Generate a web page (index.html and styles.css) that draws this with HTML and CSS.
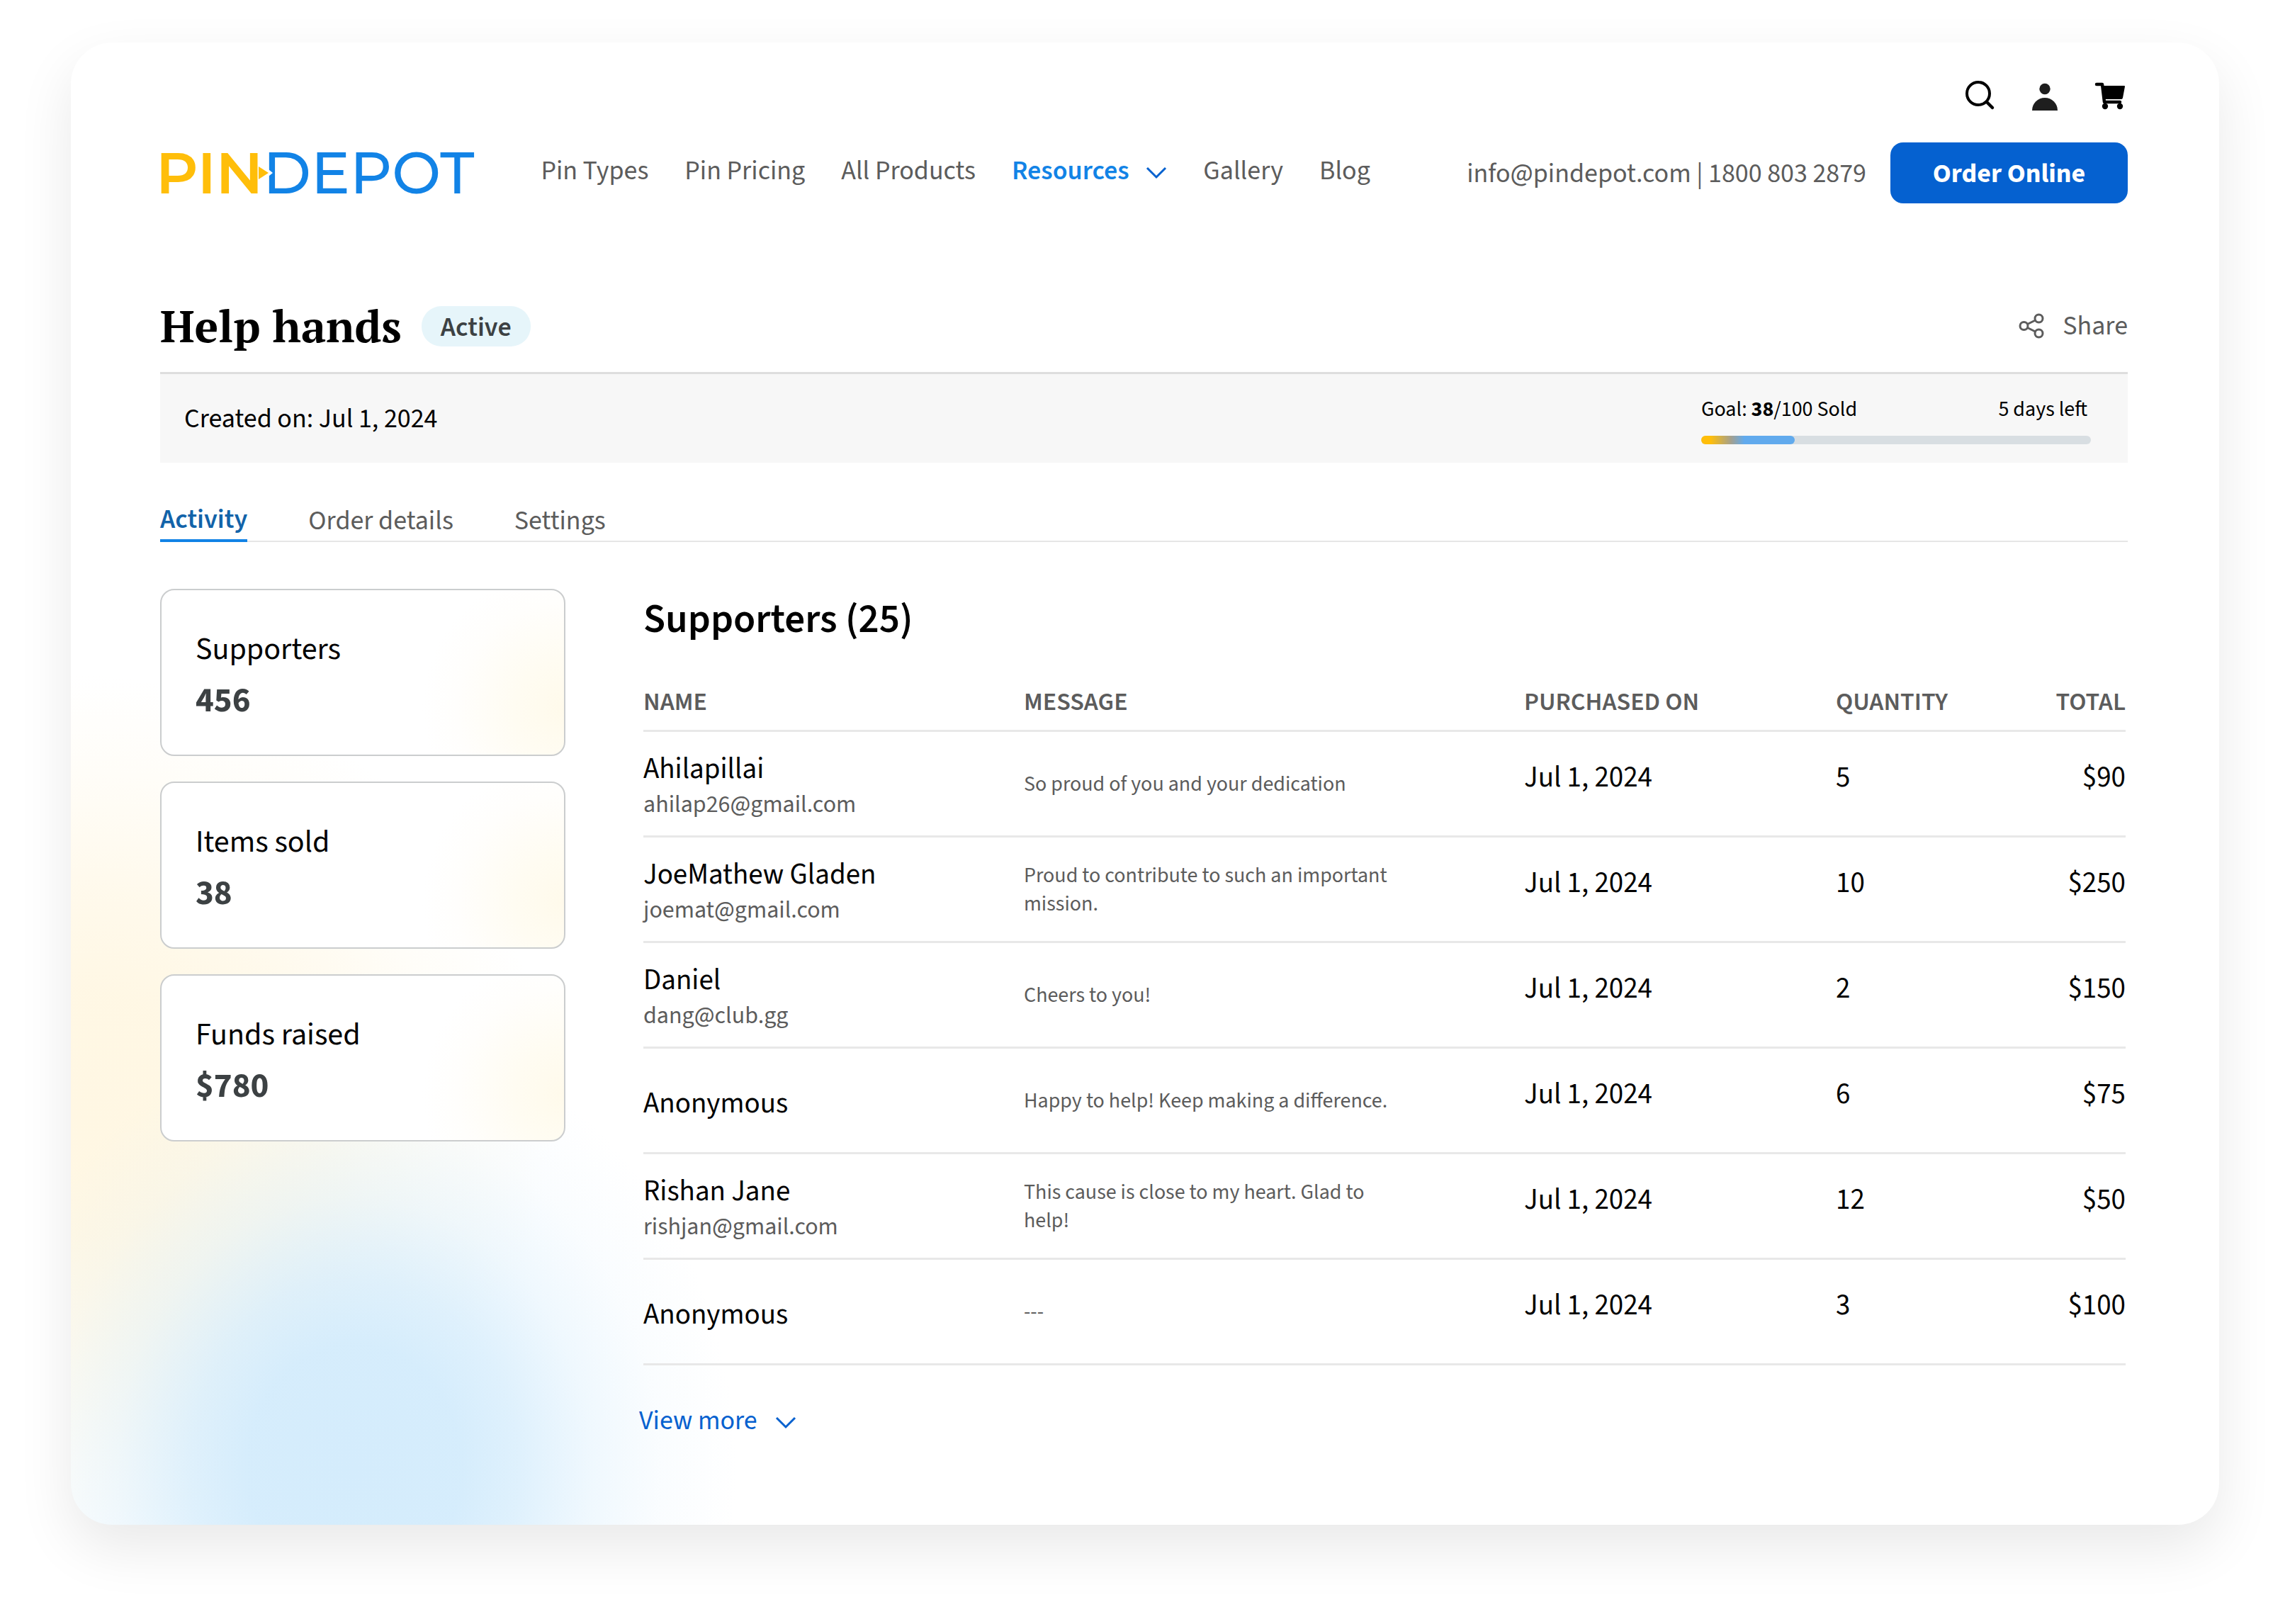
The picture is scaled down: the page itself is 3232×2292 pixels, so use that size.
FILE: index.html
```html
<!DOCTYPE html>
<html lang="en">
<head>
<meta charset="utf-8">
<meta name="viewport" content="width=device-width, initial-scale=1">
<title>Help hands | PinDepot</title>
<link rel="stylesheet" href="styles.css">
</head>
<body>
<div class="sheet">
  <header class="header">
    <div class="utility">
      <button class="icon-button" type="button" aria-label="Search">
        <svg class="icon" viewBox="0 0 44 44" fill="none" stroke="#000" aria-hidden="true"><circle cx="20" cy="19" r="16" stroke-width="4"/><path d="M32 31l8 8" stroke-width="4.500" stroke-linecap="round"/></svg>
      </button>
      <button class="icon-button" type="button" aria-label="Account">
        <svg class="icon" viewBox="0 0 44 44" fill="#1e1e1e" aria-hidden="true"><circle cx="22" cy="12.500" r="7.700"/><path d="M4 43a18 18 0 0 1 36 0z"/></svg>
      </button>
      <button class="icon-button" type="button" aria-label="Cart">
        <svg class="icon" viewBox="0 0 44 44" aria-hidden="true"><path d="M3 6h8l3 25h22" fill="none" stroke="#000" stroke-width="4.500" stroke-linecap="round" stroke-linejoin="round"/><path d="M10 8h32q1 0 1 1l-3 16q-.5 2-2 2H14z"/><circle cx="15" cy="37" r="4.200"/><circle cx="36" cy="37" r="4.200"/></svg>
      </button>
    </div>
    <div class="bar">
      <a class="logo" href="#"><span class="logo-pin">PIN</span><span class="logo-depot">DEPOT</span><svg class="logo-arrow" viewBox="0 0 20 32" aria-hidden="true"><path d="M0 0l20 16L0 32z" fill="#fff"/><path d="M0 7l14 9L0 25z" fill="#ffbe0a"/></svg></a>
      <nav class="nav" aria-label="Main">
        <a href="#">Pin Types</a>
        <a href="#">Pin Pricing</a>
        <a href="#">All Products</a>
        <a class="current" href="#">Resources <svg class="chevron" viewBox="0 0 30 18" aria-hidden="true"><path d="M2 2l13 13L28 2"/></svg></a>
        <a href="#">Gallery</a>
        <a href="#">Blog</a>
      </nav>
      <div class="contact">info@pindepot.com | 1800 803 2879</div>
      <button class="order" type="button">Order Online</button>
    </div>
  </header>

  <main>
    <div class="heading">
      <h1>Help hands</h1>
      <span class="badge">Active</span>
      <button class="share" type="button">
        <svg class="share-icon" viewBox="0 0 36 36" fill="none" stroke="#5c5c5c" stroke-width="3" aria-hidden="true"><circle cx="7.500" cy="18" r="5.500"/><circle cx="28.500" cy="7.500" r="5.500"/><circle cx="28.500" cy="28.500" r="5.500"/><path d="M12.500 15.500l11-5.500M12.500 20.500l11 5.500"/></svg>
        Share
      </button>
    </div>

    <section class="summary">
      <div class="created">Created on: Jul 1, 2024</div>
      <div class="goal">
        <div class="goal-text"><span>Goal: <b>38</b>/100 Sold</span><span>5 days left</span></div>
        <div class="track"><div class="fill" style="width:24%"></div></div>
      </div>
    </section>

    <nav class="tabs" aria-label="Campaign">
      <a class="active" href="#">Activity</a>
      <a href="#">Order details</a>
      <a href="#">Settings</a>
    </nav>

    <div class="content">
      <aside class="stats">
        <div class="stat"><div class="stat-label">Supporters</div><div class="stat-value">456</div></div>
        <div class="stat"><div class="stat-label">Items sold</div><div class="stat-value">38</div></div>
        <div class="stat"><div class="stat-label">Funds raised</div><div class="stat-value">$780</div></div>
      </aside>
      <section class="supporters">
        <h2>Supporters (25)</h2>
        <table>
          <colgroup><col class="c-name"><col class="c-message"><col class="c-date"><col class="c-quantity"><col class="c-total"></colgroup>
          <thead>
            <tr><th>NAME</th><th>MESSAGE</th><th>PURCHASED ON</th><th>QUANTITY</th><th class="total">TOTAL</th></tr>
          </thead>
          <tbody>
            <tr><td class="name">Ahilapillai<div class="email">ahilap26@gmail.com</div></td><td><p class="message">So proud of you and your dedication</p></td><td class="figure">Jul 1, 2024</td><td class="figure">5</td><td class="figure total">$90</td></tr>
            <tr><td class="name">JoeMathew Gladen<div class="email">joemat@gmail.com</div></td><td><p class="message">Proud to contribute to such an important mission.</p></td><td class="figure">Jul 1, 2024</td><td class="figure">10</td><td class="figure total">$250</td></tr>
            <tr><td class="name">Daniel<div class="email">dang@club.gg</div></td><td><p class="message">Cheers to you!</p></td><td class="figure">Jul 1, 2024</td><td class="figure">2</td><td class="figure total">$150</td></tr>
            <tr><td class="name">Anonymous</td><td><p class="message">Happy to help! Keep making a difference.</p></td><td class="figure">Jul 1, 2024</td><td class="figure">6</td><td class="figure total">$75</td></tr>
            <tr><td class="name">Rishan Jane<div class="email">rishjan@gmail.com</div></td><td><p class="message">This cause is close to my heart. Glad to help!</p></td><td class="figure">Jul 1, 2024</td><td class="figure">12</td><td class="figure total">$50</td></tr>
            <tr><td class="name">Anonymous</td><td><p class="message">---</p></td><td class="figure">Jul 1, 2024</td><td class="figure">3</td><td class="figure total">$100</td></tr>
          </tbody>
        </table>
        <button class="more" type="button">View more <svg class="chevron" viewBox="0 0 30 18" aria-hidden="true"><path d="M2 2l13 13L28 2"/></svg></button>
      </section>
    </div>
  </main>
</div>
</body>
</html>
```
FILE: styles.css
```css
* {
  box-sizing: border-box;
}

body {
  margin: 0;
  padding: 60px 100px 140px;
  background: #fff;
  color: #000;
  font-family: "Source Sans 3", "Noto Sans CJK SC", "Noto Sans", sans-serif;
  font-size: 38px;
  line-height: 50px;
}

a {
  color: inherit;
  text-decoration: none;
}

button {
  padding: 0;
  border: 0;
  background: none;
  color: inherit;
  font: inherit;
  cursor: pointer;
}

h1,
h2,
p {
  margin: 0;
}

.sheet {
  padding: 53px 129px 122px 126px;
  border-radius: 58px;
  background:
    radial-gradient(ellipse 540px 620px at 400px calc(100% - 80px), rgba(212, 236, 252, 1) 0%, rgba(212, 236, 252, .96) 28%, rgba(212, 236, 252, .75) 43%, rgba(212, 236, 252, .36) 62%, rgba(212, 236, 252, .12) 80%, rgba(212, 236, 252, 0) 100%),
    radial-gradient(ellipse 680px 620px at 0 calc(100% - 580px), rgba(255, 247, 227, 1) 0%, rgba(255, 247, 227, .95) 28%, rgba(255, 247, 227, .7) 50%, rgba(255, 247, 227, .25) 78%, rgba(255, 247, 227, 0) 100%),
    #fff;
  box-shadow: 0 32px 80px rgba(0, 0, 0, .09);
}

/* Header */
.utility {
  display: flex;
  justify-content: flex-end;
  gap: 48px;
  padding-right: 3px;
}

.icon-button,
.icon {
  display: block;
  width: 44px;
  height: 44px;
}

.bar {
  display: flex;
  align-items: center;
  margin-top: 44px;
}

.logo {
  position: relative;
  margin-left: -6px;
  font-family: Montserrat, Inter, "DejaVu Sans", sans-serif;
  font-size: 82px;
  line-height: 86px;
}

.logo-pin {
  color: #ffbe0a;
  font-weight: 600;
}

.logo-depot {
  color: #1283e6;
  font-weight: 500;
}

.logo-arrow {
  position: absolute;
  top: 27px;
  left: 145px;
  width: 20px;
  height: 32px;
}

.nav {
  display: flex;
  gap: 51px;
  margin-left: 94px;
  padding-bottom: 6px;
  color: #5c5c5c;
}

.nav .current {
  color: #1283e6;
  font-weight: 600;
}

.chevron {
  width: 30px;
  height: 18px;
  margin-left: 16px;
  fill: none;
  stroke: #0661cf;
  stroke-width: 3;
}

.contact {
  margin-left: auto;
  padding-top: 2px;
  color: #5c5c5c;
}

.order {
  width: 335px;
  height: 86px;
  margin-left: 34px;
  padding-top: 2px;
  border-radius: 18px;
  background: #0561d0;
  color: #fff;
  font-weight: 700;
}

/* Campaign heading */
.heading {
  display: flex;
  align-items: center;
  margin-top: 130px;
}

h1 {
  font-family: "PT Serif", "Noto Serif", "Liberation Serif", serif;
  font-size: 63px;
  font-weight: 700;
  line-height: 86px;
}

.badge {
  margin-left: 28px;
  padding: 5px 27px 2px;
  border-radius: 28px;
  background: #e6f5fa;
  color: #3c4143;
  font-weight: 600;
}

.share {
  display: flex;
  align-items: center;
  gap: 26px;
  margin-left: auto;
  color: #5c5c5c;
}

.share-icon {
  width: 36px;
  height: 36px;
}

.summary {
  display: flex;
  align-items: center;
  justify-content: space-between;
  margin-top: 22px;
  padding: 25px 52px 26px 34px;
  border-top: 3px solid #dedede;
  background: #f7f7f7;
}

.created {
  padding-top: 2px;
}

.goal {
  width: 550px;
}

.goal-text {
  display: flex;
  justify-content: space-between;
  padding-right: 5px;
  font-size: 30px;
  line-height: 50px;
}

.track {
  height: 12px;
  margin-top: 12px;
  border-radius: 6px;
  background: #d8dee2;
}

.fill {
  height: 12px;
  border-radius: 6px;
  background: linear-gradient(90deg, #ffbe0a 10%, #a3a08f 32%, #61aaed 46%);
}

.tabs {
  display: flex;
  gap: 86px;
  margin-top: 51px;
  border-bottom: 2px solid #e6e6e6;
  color: #5c5c5c;
}

.tabs a {
  padding: 6px 0 3px;
}

.tabs .active {
  margin-bottom: -2px;
  padding: 4px 0 3px;
  border-bottom: 4px solid #1283e6;
  color: #1263a9;
  font-weight: 600;
}

/* Statistics */
.content {
  display: flex;
  gap: 110px;
  margin-top: 66px;
  padding-right: 3px;
}

.stats {
  display: flex;
  flex: none;
  flex-direction: column;
  gap: 36px;
  width: 572px;
}

.stat {
  display: flex;
  flex-direction: column;
  gap: 8px;
  padding: 52px 48px 44px;
  border: 2px solid #cbcdce;
  border-radius: 20px;
  background: radial-gradient(circle 200px at 100% 72%, #fffaeb 0%, #fffcf2 35%, #fffefc 75%, #fff 100%);
}

.stat-label {
  font-size: 44px;
  line-height: 64px;
}

.stat-value {
  color: #3c4143;
  font-size: 49px;
  font-weight: 700;
  line-height: 64px;
}

/* Supporters */
.supporters {
  flex: 1;
}

h2 {
  padding-top: 12px;
  font-size: 57px;
  font-weight: 600;
  line-height: 64px;
}

table {
  width: 100%;
  margin-top: 40px;
  border-collapse: collapse;
  table-layout: fixed;
}

.c-name { width: 537px; }
.c-message { width: 706px; }
.c-date { width: 440px; }
.c-quantity { width: 210px; }

th,
td {
  padding: 0;
  border-bottom: 3px solid #e8e8e8;
  text-align: left;
  vertical-align: middle;
}

th {
  height: 84px;
  padding-top: 6px;
  color: #5c5c5c;
  font-size: 36px;
  font-weight: 600;
}

td {
  height: 149px;
  padding-top: 2px;
  font-size: 41px;
  line-height: 52px;
}

.name {
  padding-top: 8px;
}

.email {
  color: #5c5c5c;
  font-size: 34px;
  line-height: 50px;
}

.message {
  max-width: 540px;
  color: #5c5c5c;
  font-size: 30px;
  line-height: 40px;
}

.figure {
  padding-bottom: 20px;
}

.total {
  text-align: right;
}

.more {
  margin: 53px 0 0 -6px;
  color: #0661cf;
}

.more .chevron {
  margin-left: 18px;
}
```
